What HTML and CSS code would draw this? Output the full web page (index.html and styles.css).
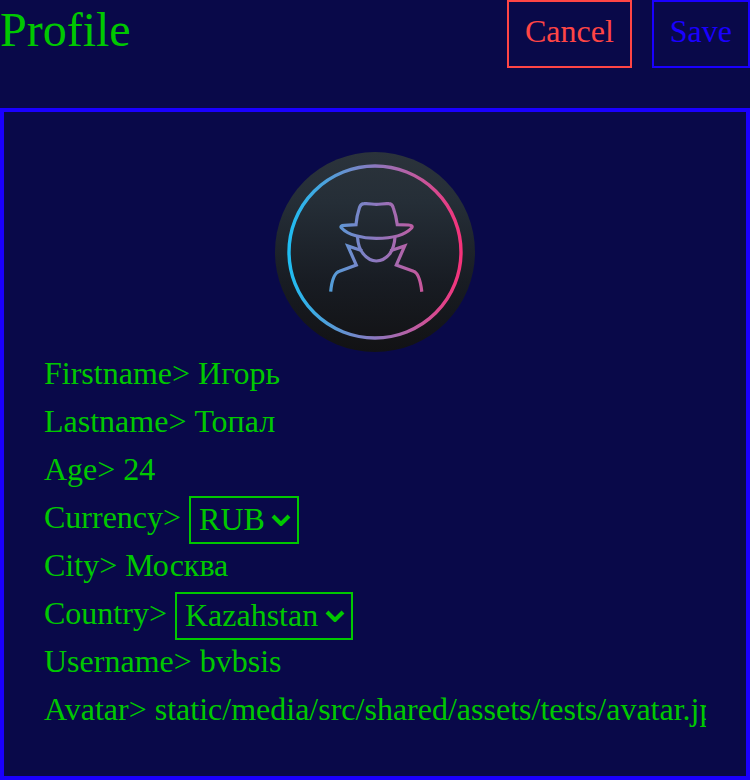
FILE: index.html
```html
<!DOCTYPE html>
<html lang="en">
<head>
<meta charset="utf-8">
<meta name="viewport" content="width=device-width, initial-scale=1">
<title>Profile</title>
<link rel="stylesheet" href="styles.css">
</head>
<body>
<main class="page">
  <header class="header">
    <h1 class="title">Profile</h1>
    <div class="actions">
      <button class="button button-cancel" type="button">Cancel</button>
      <button class="button button-save" type="submit" form="profile">Save</button>
    </div>
  </header>
  <form class="card" id="profile">
    <svg class="avatar" viewBox="0 0 200 200" role="img" aria-label="Avatar">
      <defs>
        <linearGradient id="disc" x1="0" y1="0" x2="0" y2="1">
          <stop offset="0" stop-color="#2b333b"/>
          <stop offset="0.25" stop-color="#252e37"/>
          <stop offset="0.65" stop-color="#181c23"/>
          <stop offset="1" stop-color="#121214"/>
        </linearGradient>
        <linearGradient id="neon" gradientUnits="userSpaceOnUse" x1="14" y1="0" x2="186" y2="0">
          <stop offset="0" stop-color="#1fbdf2"/>
          <stop offset="0.28" stop-color="#5b98d5"/>
          <stop offset="0.5" stop-color="#8c78bf"/>
          <stop offset="0.75" stop-color="#c25a9f"/>
          <stop offset="1" stop-color="#f5327a"/>
        </linearGradient>
      </defs>
      <circle cx="100" cy="100" r="100" fill="url(#disc)"/>
      <g fill="none" stroke="url(#neon)" stroke-width="3.2">
        <circle cx="100" cy="100" r="86" stroke-width="3.4"/>
        <path d="M81 72.7 C81.5 66 83 60 84.500 55.500 Q85.800 51.700 89 51.700 C94 51.200 97 52.400 101.300 52.400 C106 52.400 109 51.200 113.800 51.700 Q117 51.700 118.200 55.500 C119.800 60 121.500 66 122.300 72.700 L133.500 73 Q138.500 73.500 136.600 76 C130 83 116 86.400 101.300 86.400 C87 86.400 73 83 66.600 76 Q64.500 73.500 69.500 73.300 Z"/>
        <path d="M82.500 85 C83 93 85 98 88 101.500 C92 106.500 96 109 101.300 109 C107 109 111 106.500 115 101.500 C118 97 119.500 92 120 85"/>
        <path d="M87.300 98.700 L72.800 94 L81.300 113 L64.500 119.300 C58.500 121 56.500 131 55.700 139.700"/>
        <path d="M115.300 98.700 L129.700 94 L121.300 113 L138.500 119.300 C144 121 145.800 131 146.800 139.700"/>
      </g>
    </svg>
    <div class="field">
      <label for="firstname">Firstname&gt;</label>
      <input class="input" id="firstname" type="text" value="Игорь">
    </div>
    <div class="field">
      <label for="lastname">Lastname&gt;</label>
      <input class="input" id="lastname" type="text" value="Топал">
    </div>
    <div class="field">
      <label for="age">Age&gt;</label>
      <input class="input" id="age" type="text" inputmode="numeric" value="24">
    </div>
    <div class="field">
      <label for="currency">Currency&gt;</label>
      <span class="picker">
        <select class="select" id="currency"><option>RUB</option></select>
        <svg class="chevron" viewBox="0 0 20 12" aria-hidden="true"><path d="M2 2 L10 10 L18 2"/></svg>
      </span>
    </div>
    <div class="field">
      <label for="city">City&gt;</label>
      <input class="input" id="city" type="text" value="Москва">
    </div>
    <div class="field">
      <label for="country">Country&gt;</label>
      <span class="picker">
        <select class="select" id="country"><option>Kazahstan</option></select>
        <svg class="chevron" viewBox="0 0 20 12" aria-hidden="true"><path d="M2 2 L10 10 L18 2"/></svg>
      </span>
    </div>
    <div class="field">
      <label for="username">Username&gt;</label>
      <input class="input" id="username" type="text" value="bvbsis">
    </div>
    <div class="field">
      <label for="avatar">Avatar&gt;</label>
      <input class="input" id="avatar" type="text" value="static/media/src/shared/assets/tests/avatar.jpg">
    </div>
  </form>
</main>
</body>
</html>
```
FILE: styles.css
```css
:root {
  --bg: #090949;
  --green: #00c800;
  --blue: #1a00ff;
  --red: #ff4545;
}

* {
  box-sizing: border-box;
}

body {
  margin: 0;
  background: var(--bg);
  color: var(--green);
  font: 32px/42px "Liberation Serif", "Times New Roman", serif;
}

.page {
  display: flex;
  flex-direction: column;
  gap: 40px;
}

.header {
  display: flex;
  justify-content: space-between;
  align-items: flex-start;
}

.title {
  margin: 0;
  font-size: 48px;
  font-weight: 400;
  line-height: 60px;
}

.actions {
  display: flex;
  gap: 20px;
}

.button {
  padding: 8px 16px 14px;
  border: 2px solid;
  background: none;
  font: inherit;
  cursor: pointer;
}

.button-cancel {
  color: var(--red);
}

.button-save {
  color: var(--blue);
}

.card {
  display: flex;
  flex-direction: column;
  padding: 40px;
  border: 4px solid var(--blue);
}

.avatar {
  width: 200px;
  height: 200px;
  align-self: center;
}

.field {
  display: flex;
  align-items: flex-start;
  gap: 8px;
  height: 48px;
}

.input {
  flex: 1;
  min-width: 0;
  height: 42px;
  padding: 0;
  border: 0;
  outline: 0;
  background: none;
  color: inherit;
  font: inherit;
}

.picker {
  position: relative;
  display: flex;
}

.select {
  appearance: none;
  height: 48px;
  padding: 0 32px 2px 8px;
  border: 2px solid var(--green);
  border-radius: 0;
  background: var(--bg);
  color: inherit;
  font: inherit;
}

.chevron {
  position: absolute;
  right: 8px;
  top: 18px;
  width: 20px;
  height: 12px;
  fill: none;
  stroke: var(--green);
  stroke-width: 4px;
  pointer-events: none;
}
```
